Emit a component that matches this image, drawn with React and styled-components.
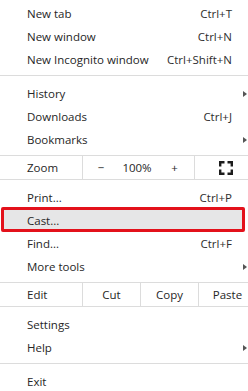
import React from 'react';
import styled, { createGlobalStyle } from 'styled-components';

const GlobalStyle = createGlobalStyle`
  html, body {
    margin: 0;
    padding: 0;
    background: #fff;
    overflow: hidden;
  }
  body {
    font-family: "Open Sans", "Noto Sans", Arial, sans-serif;
  }
`;

const Viewport = styled.div`
  width: 248px;
  height: 391px;
  overflow: hidden;
  background: #fff;
`;

const Menu = styled.div`
  width: 256px;
  padding-top: 2px;
  font-size: 11.5px;
  color: #262626;
`;

const Item = styled.div`
  position: relative;
  display: flex;
  align-items: center;
  height: 23px;
  padding: 0 9px 0 27px;
  white-space: nowrap;
`;

const Label = styled.span`
  position: relative;
  z-index: 1;
  flex: 1;
`;

const Shortcut = styled.span`
  position: relative;
  z-index: 1;
  color: #2e2e2e;
`;

const Trailing = styled.span`
  display: flex;
  justify-content: flex-end;
  align-items: center;
  width: 15px;
`;

const Arrow = styled.span`
  width: 0;
  height: 0;
  border-top: 3.5px solid transparent;
  border-bottom: 3.5px solid transparent;
  border-left: 4px solid #555;
`;

// annotation drawn over the hovered row
const Callout = styled.span`
  position: absolute;
  top: -2px;
  bottom: 0;
  left: 1px;
  right: 11px;
  border: 3px solid #e3111b;
  border-radius: 2px;
  background: #e6e6e7;
`;

const Separator = styled.div`
  height: 1px;
  margin: 4px 0 6px;
  background: #dcdcdc;
`;

const ControlRow = styled.div`
  display: flex;
  height: 23px;
  margin: 4px 0 6px;
  border-top: 1px solid #dcdcdc;
  border-bottom: 1px solid #dcdcdc;
  white-space: nowrap;
`;

const Cell = styled.div`
  box-sizing: border-box;
  display: flex;
  align-items: center;
  justify-content: ${(p) => (p.$left ? 'flex-start' : 'center')};
  width: ${(p) => (p.$w ? `${p.$w}px` : 'auto')};
  flex: ${(p) => (p.$w ? 'none' : '1')};
  padding-left: ${(p) => (p.$left ? '27px' : '0')};
  border-right: ${(p) => (p.$divider ? '1px solid #dcdcdc' : 'none')};
`;

const ZoomGroup = styled.div`
  box-sizing: border-box;
  display: grid;
  grid-template-columns: 36px 36px 1fr;
  width: 112px;
  border-right: 1px solid #dcdcdc;
`;

const ZoomButton = styled.span`
  display: flex;
  align-items: center;
  justify-content: center;
`;

const FullscreenIcon = () => (
  <svg width="14" height="14" viewBox="0 0 14 14" fill="none" stroke="#1c1c1c" strokeWidth="2.4">
    <path d="M1.2 5.5V1.2h4.3" />
    <path d="M8.5 1.2h4.3v4.3" />
    <path d="M12.8 8.5v4.3H8.5" />
    <path d="M5.5 12.8H1.2V8.5" />
  </svg>
);

const MenuItem = ({ label, shortcut, submenu, hovered }) => (
  <Item>
    {hovered && <Callout />}
    <Label>{label}</Label>
    {shortcut && <Shortcut>{shortcut}</Shortcut>}
    <Trailing>{submenu && <Arrow />}</Trailing>
  </Item>
);

export default function App() {
  return (
    <Viewport>
      <GlobalStyle />
      <Menu>
        <MenuItem label="New tab" shortcut="Ctrl+T" />
        <MenuItem label="New window" shortcut="Ctrl+N" />
        <MenuItem label="New Incognito window" shortcut="Ctrl+Shift+N" />
        <Separator />
        <MenuItem label="History" submenu />
        <MenuItem label="Downloads" shortcut="Ctrl+J" />
        <MenuItem label="Bookmarks" submenu />
        <ControlRow>
          <Cell $left $w={83} $divider>Zoom</Cell>
          <ZoomGroup>
            <ZoomButton>−</ZoomButton>
            <ZoomButton>100%</ZoomButton>
            <ZoomButton>+</ZoomButton>
          </ZoomGroup>
          <Cell>
            <FullscreenIcon />
          </Cell>
        </ControlRow>
        <MenuItem label="Print..." shortcut="Ctrl+P" />
        <MenuItem label="Cast..." hovered />
        <MenuItem label="Find..." shortcut="Ctrl+F" />
        <MenuItem label="More tools" submenu />
        <ControlRow>
          <Cell $left $w={83} $divider>Edit</Cell>
          <Cell $w={58} $divider>Cut</Cell>
          <Cell $w={58} $divider>Copy</Cell>
          <Cell>Paste</Cell>
        </ControlRow>
        <MenuItem label="Settings" />
        <MenuItem label="Help" submenu />
        <Separator />
        <MenuItem label="Exit" />
      </Menu>
    </Viewport>
  );
}
